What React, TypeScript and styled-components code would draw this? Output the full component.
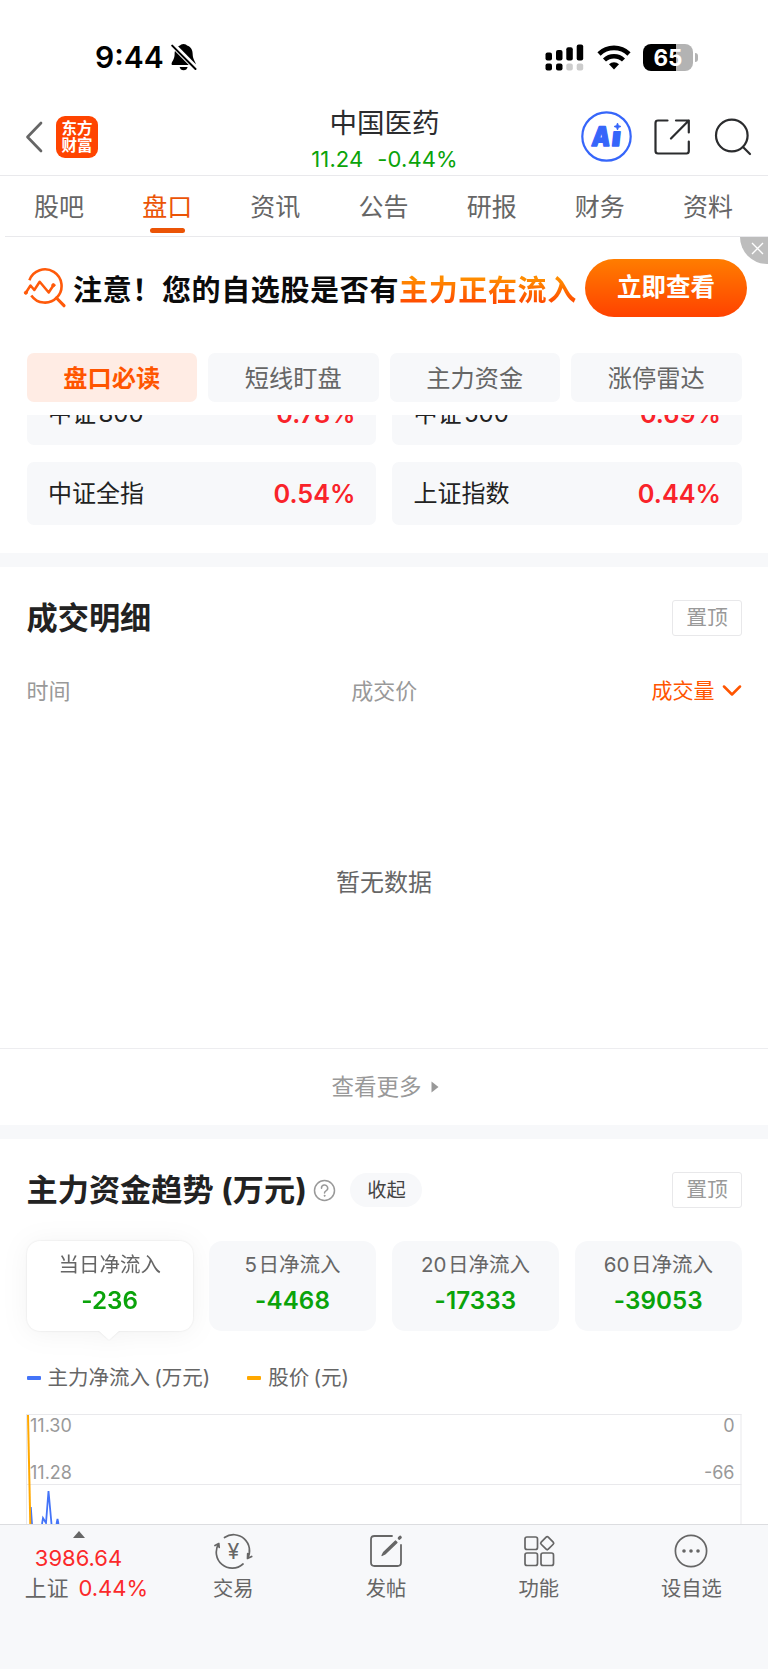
import React from 'react';
import styled, { createGlobalStyle, css } from 'styled-components';

const GlobalStyle = createGlobalStyle`
  * { box-sizing: border-box; }
  html, body { margin: 0; padding: 0; background: #fff; }
  body {
    font-family: Inter, "Noto Sans CJK SC", sans-serif;
    color: #222;
    -webkit-font-smoothing: antialiased;
  }
`;

const Screen = styled.div`
  width: 768px;
  height: 1669px;
  overflow: hidden;
  background: #fff;
  display: flex;
  flex-direction: column;
  white-space: nowrap;
`;

/* ---------- status bar ---------- */
const StatusBar = styled.div`
  height: 100px;
  padding: 14px 70px 0 95px;
  display: flex;
  align-items: center;
  justify-content: space-between;
`;
const StatusGroup = styled.div<{ $gap: number }>`
  display: flex;
  align-items: center;
  gap: ${(p) => p.$gap}px;
`;
const Clock = styled.span`
  font-size: 30px;
  font-weight: 600;
  line-height: 36px;
  color: #000;
`;
const BatteryWrap = styled.div`
  display: flex;
  align-items: center;
  gap: 2px;
`;
const Battery = styled.div`
  width: 50px;
  height: 27px;
  border-radius: 8px;
  background: linear-gradient(90deg, #000 0 65%, #b3b3b3 65%);
  color: #fff;
  font-size: 22.5px;
  font-weight: 700;
  line-height: 27px;
  text-align: center;
`;
const BatteryNub = styled.div`
  width: 3px;
  height: 9px;
  border-radius: 0 3px 3px 0;
  background: #b3b3b3;
`;

/* ---------- header ---------- */
const Header = styled.header`
  height: 76px;
  padding: 0 16px 0 25px;
  border-bottom: 1px solid #e9e9ec;
  display: grid;
  grid-template-columns: 1fr 200px 1fr;
`;
const HeaderLeft = styled.div`
  display: flex;
  gap: 13px;
  align-items: center;
  height: 73px;
`;
const HeaderRight = styled.div`
  display: flex;
  justify-content: flex-end;
  align-items: center;
  height: 73px;
`;
const AppLogo = styled.div`
  width: 42px;
  height: 42px;
  border-radius: 9px;
  background: #ff4400;
  color: #fff;
  font-size: 15.5px;
  font-weight: 700;
  line-height: 17px;
  text-align: center;
  padding-top: 4px;
`;
const StockTitle = styled.div`
  display: flex;
  flex-direction: column;
  align-items: center;
  margin-left: -8px;
`;
const StockName = styled.div`
  margin-top: 3.5px;
  font-size: 27.5px;
  line-height: 38px;
  color: #2b2c2e;
`;
const StockQuote = styled.div`
  display: flex;
  gap: 14px;
  font-size: 22px;
  line-height: 28px;
  margin-top: 3.5px;
  letter-spacing: 0.1px;
  color: #0aa30a;
`;

/* ---------- tabs ---------- */
const Tabs = styled.nav`
  height: 61px;
  margin-left: 5px;
  padding-right: 6px;
  border-bottom: 1px solid #e9e9ec;
  display: grid;
  grid-template-columns: repeat(7, 1fr);
`;
const Tab = styled.div<{ $active?: boolean }>`
  display: flex;
  flex-direction: column;
  align-items: center;
  font-size: 25px;
  line-height: 36px;
  padding-top: 13px;
  color: ${(p) => (p.$active ? '#eb5406' : '#666')};
  ${(p) =>
    p.$active &&
    css`
      &::after {
        content: '';
        width: 35px;
        height: 5px;
        margin-top: 3px;
        border-radius: 3px;
        background: #eb5406;
      }
    `}
`;

/* ---------- banner ---------- */
const Banner = styled.div`
  position: relative;
  height: 102px;
  padding: 0 21px 0 23px;
  display: flex;
  align-items: center;
`;
const BannerText = styled.div`
  margin: 6px 0 0 6px;
  flex: 1;
  font-size: 29px;
  font-weight: 700;
  letter-spacing: 0.64px;
  line-height: 40px;
  color: #0b0b0b;
  display: flex;
`;
const BannerAccent = styled.span`
  background: linear-gradient(180deg, #ff8c00 20%, #ff4a00 80%);
  -webkit-background-clip: text;
  background-clip: text;
  color: transparent;
`;
const BannerButton = styled.div`
  width: 162px;
  height: 58px;
  margin-top: -1px;
  border-radius: 29px;
  background: linear-gradient(180deg, #ff7d00, #ff4200);
  color: #fff;
  font-size: 24.5px;
  font-weight: 700;
  line-height: 57px;
  text-align: center;
`;
const BannerClose = styled.div`
  position: absolute;
  top: 0;
  right: 0;
  width: 28px;
  height: 27px;
  border-bottom-left-radius: 28px;
  background: #bdbdbd;
  display: flex;
  align-items: center;
  justify-content: center;
  padding: 0 0 5px 6px;
`;

/* ---------- chips ---------- */
const Chips = styled.div`
  margin-top: 14px;
  padding: 0 26.5px;
  display: grid;
  grid-template-columns: repeat(4, 1fr);
  gap: 11px;
`;
const Chip = styled.div<{ $active?: boolean }>`
  height: 49px;
  border-radius: 7px;
  font-size: 24.2px;
  line-height: 51px;
  text-align: center;
  background: ${(p) => (p.$active ? '#ffece4' : '#f7f8fa')};
  color: ${(p) => (p.$active ? '#ff5500' : '#666')};
  font-weight: ${(p) => (p.$active ? 700 : 400)};
`;

/* ---------- index grid ---------- */
const IndexViewport = styled.div`
  margin-top: 13px;
  height: 138px;
  padding: 0 26.5px;
  overflow: hidden;
`;
const IndexGrid = styled.div`
  margin-top: -33px;
  display: grid;
  grid-template-columns: 1fr 1fr;
  gap: 17px 16px;
`;
const IndexCard = styled.div`
  height: 63px;
  padding: 1px 20.5px 0 21.5px;
  border-radius: 7px;
  background: #f7f8fa;
  display: flex;
  align-items: center;
  justify-content: space-between;
`;
const IndexName = styled.span`
  display: flex;
  gap: 2.5px;
  font-size: 24px;
  line-height: 34px;
  color: #222;
`;
const IndexChange = styled.span`
  font-size: 25.3px;
  font-weight: 600;
  line-height: 34px;
  color: #f9232a;
`;

const Divider = styled.div`
  height: 14px;
  background: #f7f8fa;
`;

/* ---------- sections ---------- */
const SectionHead = styled.div<{ $height: number }>`
  height: ${(p) => p.$height}px;
  padding: 0 26px 0 26.5px;
  display: flex;
  align-items: center;
`;
const SectionTitle = styled.h2`
  margin: 0;
  font-size: 31.2px;
  font-weight: 700;
  line-height: 44px;
  color: #222;
`;
const PinButton = styled.div`
  margin-left: auto;
  width: 70px;
  height: 36px;
  border: 1px solid #e8e8ea;
  border-radius: 3px;
  font-size: 20.8px;
  line-height: 34px;
  text-align: center;
  color: #999;
`;
const CollapsePill = styled.div`
  margin-left: 14px;
  width: 72px;
  height: 34px;
  border-radius: 17px;
  background: #f7f8fa;
  font-size: 19.3px;
  line-height: 34px;
  text-align: center;
  color: #444;
`;
const HelpIcon = styled.svg`
  margin-left: 6.5px;
`;
const TableHead = styled.div`
  height: 44px;
  padding: 2px 26px 0 26.5px;
  display: grid;
  grid-template-columns: 1fr 1fr 1fr;
  align-items: center;
  font-size: 22px;
  line-height: 32px;
  color: #999;
`;
const TableCell = styled.div<{ $align: string; $sorted?: boolean }>`
  display: flex;
  align-items: center;
  justify-content: ${(p) => p.$align};
  gap: 7.5px;
  ${(p) =>
    p.$sorted &&
    css`
      font-size: 21px;
      color: #ff5500;
    `}
`;
const Empty = styled.div`
  height: 337px;
  border-bottom: 1px solid #ededf0;
  font-size: 24px;
  line-height: 36px;
  padding-top: 152.5px;
  text-align: center;
  color: #666;
`;
const More = styled.div`
  height: 76px;
  padding-left: 2px;
  display: flex;
  align-items: center;
  justify-content: center;
  gap: 9px;
  font-size: 22.5px;
  line-height: 32px;
  color: #999;
`;

/* ---------- capital flow ---------- */
const FlowCards = styled.div`
  padding: 0 26.5px;
  display: grid;
  grid-template-columns: repeat(4, 1fr);
  gap: 16.5px;
`;
const FlowCard = styled.div<{ $active?: boolean }>`
  position: relative;
  height: 90px;
  border-radius: 13px;
  padding-top: 9px;
  text-align: center;
  background: ${(p) => (p.$active ? '#fff' : '#f7f8fa')};
  ${(p) =>
    p.$active &&
    css`
      filter: drop-shadow(0 0 1px rgba(0, 0, 0, 0.1)) drop-shadow(0 2px 13px rgba(0, 0, 0, 0.05));
      &::after {
        content: '';
        position: absolute;
        top: 89.5px;
        left: 50%;
        margin-left: -10.5px;
        border: 10.5px solid transparent;
        border-top: 9px solid #fff;
        border-bottom: 0;
      }
    `}
`;
const FlowLabel = styled.div`
  display: flex;
  justify-content: center;
  gap: 1.5px;
  font-size: 20.5px;
  line-height: 30px;
  color: #666;
`;
const FlowValue = styled.div`
  margin-top: 6px;
  font-size: 24.2px;
  font-weight: 600;
  line-height: 30px;
  letter-spacing: 0.1px;
  color: #0aa30a;
`;
const Legend = styled.div`
  margin-top: 31px;
  height: 31px;
  padding: 1px 0 0 26.5px;
  display: flex;
  align-items: center;
  gap: 37px;
`;
const LegendItem = styled.div<{ $color: string }>`
  display: flex;
  align-items: center;
  gap: 7px;
  font-size: 20.5px;
  line-height: 30px;
  word-spacing: -1.5px;
  color: #666;
  &::before {
    content: '';
    width: 14px;
    height: 4px;
    border-radius: 1px;
    background: ${(p) => p.$color};
  }
`;
const Chart = styled.svg`
  display: block;
  flex: none;
  margin-top: 21px;
`;

/* ---------- bottom nav ---------- */
const BottomNav = styled.footer`
  flex: 1;
  border-top: 1px solid #dcdde0;
  background: #f7f8fa;
  display: grid;
  grid-template-columns: 157px repeat(4, 152.7px);
`;
const NavItem = styled.div`
  display: flex;
  flex-direction: column;
  align-items: center;
  padding-top: 8px;
  font-size: 20.3px;
  line-height: 30px;
  color: #666;
  gap: 5px;
`;
const IndexTicker = styled.div`
  display: flex;
  flex-direction: column;
  align-items: center;
  padding-top: 6px;
  font-size: 22px;
  color: #fb2a2a;
`;
const TickerValue = styled.div`
  margin-top: 5px;
  line-height: 30px;
`;
const TickerRow = styled.div`
  display: flex;
  align-items: center;
  gap: 10px;
  line-height: 31px;
  margin-left: 16px;
`;
const TickerName = styled.span`
  font-size: 21.8px;
  color: #666;
`;

const BellOff = () => (
  <svg width="26" height="28" viewBox="0 0 26 28">
    <path d="M12.5 1C14.500 1 15.500 2 16 2.600C20 3.800 21.700 7 21.700 11.500C21.700 16 24.300 18.500 24.600 20.500C24.800 21.600 24 22 23.300 22H2C1 22 .4 21.400.6 20.400C1 18.500 3.600 16 3.600 11.500C3.600 7 5.500 3.700 9 2.600C9.600 2 10.600 1 12.500 1Z" fill="#000" />
    <path d="M8.600 24H16.600C16.200 26 14.700 27.300 12.600 27.300S9 26 8.600 24Z" fill="#000" />
    <path d="M0 0L26 26.500" stroke="#fff" strokeWidth="5.500" />
    <path d="M1.200 2.600L24.500 26" stroke="#000" strokeWidth="2" strokeLinecap="round" />
  </svg>
);

const Signal = () => (
  <svg width="39" height="27" viewBox="0 0 39 27">
    <rect x="0.500" y="8.500" width="6.500" height="8" rx="2" />
    <rect x="11" y="6" width="6.500" height="10.500" rx="2" />
    <rect x="21.300" y="3.200" width="6.500" height="13.300" rx="2" />
    <rect x="31.700" y="0.500" width="6.500" height="16" rx="2" />
    <rect x="0.500" y="19.500" width="6.500" height="7" rx="2" />
    <rect x="11" y="19.500" width="6.500" height="7" rx="2" />
    <rect x="21.300" y="19.500" width="6.500" height="7" rx="2" fill="#ccc" />
    <rect x="31.700" y="19.500" width="6.500" height="7" rx="2" fill="#ccc" />
  </svg>
);

const Wifi = () => (
  <svg width="34" height="25" viewBox="0 0 34 25">
    <path d="M2 9A21.500 21.500 0 0 1 32 9" fill="none" stroke="#000" strokeWidth="4.600" />
    <path d="M7.500 15A13.800 13.800 0 0 1 26.500 15" fill="none" stroke="#000" strokeWidth="4.400" />
    <path d="M17 24.500L12 19.300A7.200 7.200 0 0 1 22 19.300Z" />
  </svg>
);

const BackIcon = () => (
  <svg width="18" height="32" viewBox="0 0 18 32">
    <path d="M16 2L2.500 16L16 30" fill="none" stroke="#666" strokeWidth="2.700" strokeLinecap="round" strokeLinejoin="round" />
  </svg>
);

const AiIcon = () => (
  <svg width="51" height="51" viewBox="0 0 51 51">
    <circle cx="25.500" cy="25.500" r="24.200" fill="none" stroke="#3666fa" strokeWidth="2.200" />
    <g transform="translate(0 35) skewX(-6)" fill="#3666fa" stroke="#3666fa" strokeWidth="1.400" strokeLinejoin="round" fontFamily="Inter" fontWeight="900" fontSize="27">
      <text x="10" y="-0.500" textLength="18.500" lengthAdjust="spacingAndGlyphs">A</text>
      <text x="30" y="0" fontSize="26" textLength="9" lengthAdjust="spacingAndGlyphs">ı</text>
    </g>
    <path d="M36.500 12L37.500 14.500L40 15.500L37.500 16.500L36.500 19L35.500 16.500L33 15.500L35.500 14.500Z" fill="#3666fa" stroke="#3666fa" strokeWidth="0.800" />
  </svg>
);

const ShareSvg = styled.svg`
  margin-left: 22px;
`;
const ShareIcon = () => (
  <ShareSvg width="36" height="36" viewBox="0 0 36 36" fill="none" stroke="#2b2c2e" strokeWidth="2.200" strokeLinecap="round" strokeLinejoin="round">
    <path d="M13.500 1.500H4Q1.500 1.500 1.500 4V32Q1.500 34.500 4 34.500H32.500Q34.800 34.500 34.800 32V22.500" />
    <path d="M22 1.500H34.800V13.500M34.800 1.500L17 19.500" />
  </ShareSvg>
);

const SearchSvg = styled.svg`
  margin-left: 24px;
`;
const SearchIcon = () => (
  <SearchSvg width="38" height="38" viewBox="0 0 38 38" fill="none" stroke="#2b2c2e" strokeWidth="2.200" strokeLinecap="round">
    <circle cx="17.800" cy="17.500" r="15.800" />
    <path d="M29 29L36 36" />
  </SearchSvg>
);

const BannerIcon = () => (
  <svg width="44" height="42" viewBox="0 0 44 42" fill="none" stroke="#ff5a0a" strokeLinecap="round" strokeLinejoin="round">
    <path d="M6.400 13.200A16.600 16.600 0 1 1 8.300 28.400" strokeWidth="2.600" strokeLinecap="butt" />
    <path d="M33.500 31L41 38.700" strokeWidth="3.200" />
    <path d="M3 25.500L7.500 18.500L11.300 23L16.700 14.700L25.700 25.500L30.300 18.500" strokeWidth="2.500" />
    <circle cx="2.800" cy="25.800" r="1.500" fill="#ff5a0a" strokeWidth="1" />
    <circle cx="30.400" cy="18.200" r="1.600" fill="#ff5a0a" strokeWidth="1" />
  </svg>
);

const TradeIcon = () => (
  <svg width="40" height="36" viewBox="0 0 40 36" fill="none" stroke="#666" strokeWidth="1.700" strokeLinecap="round" strokeLinejoin="round">
    <path d="M11.500 4.500A16 16 0 0 1 34.500 25.500L38.700 23.500M34.500 25.500L34.700 20.500" />
    <path d="M30 31A16 16 0 0 1 5.800 10.500L2 12.500M5.800 10.500L6.200 14.500" />
    <text x="20.300" y="26" textAnchor="middle" fontFamily="Inter" fontSize="21.500" fill="#666" stroke="none">¥</text>
  </svg>
);

const PostIcon = () => (
  <svg width="36" height="36" viewBox="0 0 36 36" fill="none" stroke="#666" strokeWidth="1.800" strokeLinecap="round" strokeLinejoin="round">
    <path d="M24 3H6.500Q3 3 3 6.500V29.500Q3 33 6.500 33H29.500Q33 33 33 29.500V12" />
    <path d="M14 22.500L15.500 19.500L27.500 8L29 9.500L17 21Z" fill="#666" strokeWidth="1.200" />
    <path d="M31.300 5.200L32.200 4.300" strokeWidth="3.200" />
  </svg>
);

const FeaturesIcon = () => (
  <svg width="36" height="36" viewBox="0 0 36 36" fill="none" stroke="#666" strokeWidth="1.700" strokeLinejoin="round">
    <rect x="4" y="4" width="12.500" height="12.500" rx="2" />
    <rect x="4" y="20" width="12.500" height="12.500" rx="2" />
    <rect x="20" y="20" width="12.500" height="12.500" rx="2" />
    <rect x="21.200" y="5.200" width="10" height="10" rx="1.500" transform="rotate(45 26.200 10.200)" />
  </svg>
);

const MoreIcon = () => (
  <svg width="36" height="36" viewBox="0 0 36 36" fill="#666">
    <circle cx="18" cy="18" r="15.600" fill="none" stroke="#666" strokeWidth="1.700" />
    <circle cx="11" cy="18" r="1.800" />
    <circle cx="18" cy="18" r="1.800" />
    <circle cx="25" cy="18" r="1.800" />
  </svg>
);

const tabs = ['股吧', '盘口', '资讯', '公告', '研报', '财务', '资料'];
const chips = ['盘口必读', '短线盯盘', '主力资金', '涨停雷达'];
const indices = [
  { name: '中证', code: '800', change: '0.78%' },
  { name: '中证', code: '500', change: '0.69%' },
  { name: '中证全指', code: '', change: '0.54%' },
  { name: '上证指数', code: '', change: '0.44%' },
];
const flows = [
  { days: '', label: '当日净流入', value: '-236' },
  { days: '5', label: '日净流入', value: '-4468' },
  { days: '20', label: '日净流入', value: '-17333' },
  { days: '60', label: '日净流入', value: '-39053' },
];
const navItems = [
  { label: '交易', Icon: TradeIcon },
  { label: '发帖', Icon: PostIcon },
  { label: '功能', Icon: FeaturesIcon },
  { label: '设自选', Icon: MoreIcon },
];

export default function App() {
  return (
    <Screen>
      <GlobalStyle />
      <StatusBar>
        <StatusGroup $gap={7}>
          <Clock>9:44</Clock>
          <BellOff />
        </StatusGroup>
        <StatusGroup $gap={12.4}>
          <Signal />
          <Wifi />
          <BatteryWrap>
            <Battery>65</Battery>
            <BatteryNub />
          </BatteryWrap>
        </StatusGroup>
      </StatusBar>

      <Header>
        <HeaderLeft>
          <BackIcon />
          <AppLogo>
            东方
            <br />
            财富
          </AppLogo>
        </HeaderLeft>
        <StockTitle>
          <StockName>中国医药</StockName>
          <StockQuote>
            <span>11.24</span>
            <span>-0.44%</span>
          </StockQuote>
        </StockTitle>
        <HeaderRight>
          <AiIcon />
          <ShareIcon />
          <SearchIcon />
        </HeaderRight>
      </Header>

      <Tabs>
        {tabs.map((t, i) => (
          <Tab key={t} $active={i === 1}>
            {t}
          </Tab>
        ))}
      </Tabs>

      <Banner>
        <BannerIcon />
        <BannerText>
          注意！您的自选股是否有<BannerAccent>主力正在流入</BannerAccent>
        </BannerText>
        <BannerButton>立即查看</BannerButton>
        <BannerClose>
          <svg width="13" height="13" viewBox="0 0 13 13" stroke="#fff" strokeWidth="1.400">
            <path d="M1 1L12 12M12 1L1 12" />
          </svg>
        </BannerClose>
      </Banner>

      <Chips>
        {chips.map((c, i) => (
          <Chip key={c} $active={i === 0}>
            {c}
          </Chip>
        ))}
      </Chips>

      <IndexViewport>
        <IndexGrid>
          {indices.map(({ name, code, change }) => (
            <IndexCard key={name + code}>
              <IndexName>
                {name}
                {code && <span>{code}</span>}
              </IndexName>
              <IndexChange>{change}</IndexChange>
            </IndexCard>
          ))}
        </IndexGrid>
      </IndexViewport>

      <Divider />

      <SectionHead $height={101}>
        <SectionTitle>成交明细</SectionTitle>
        <PinButton>置顶</PinButton>
      </SectionHead>
      <TableHead>
        <TableCell $align="flex-start">时间</TableCell>
        <TableCell $align="center">成交价</TableCell>
        <TableCell $align="flex-end" $sorted>
          成交量
          <svg width="20" height="12" viewBox="0 0 20 12" fill="none" stroke="#ff5500" strokeWidth="2.500" strokeLinecap="round" strokeLinejoin="round">
            <path d="M2 1.500L10 9.500L18 1.500" />
          </svg>
        </TableCell>
      </TableHead>
      <Empty>暂无数据</Empty>
      <More>
        查看更多
        <svg width="8" height="12" viewBox="0 0 8 12" fill="#999">
          <path d="M0.500 0.500L7.500 6L0.500 11.500Z" />
        </svg>
      </More>

      <Divider />

      <SectionHead $height={102}>
        <SectionTitle>主力资金趋势 (万元)</SectionTitle>
        <HelpIcon width="23" height="23" viewBox="0 0 23 23" fill="none" stroke="#999" strokeWidth="1.500" strokeLinecap="round">
          <circle cx="11.500" cy="11.500" r="10" />
          <path d="M8.500 9.300A3.100 3.100 0 1 1 13 11.800Q11.500 12.600 11.500 14" />
          <circle cx="11.500" cy="16.800" r="0.500" fill="#999" strokeWidth="1" />
        </HelpIcon>
        <CollapsePill>收起</CollapsePill>
        <PinButton>置顶</PinButton>
      </SectionHead>
      <FlowCards>
        {flows.map(({ days, label, value }, i) => (
          <FlowCard key={value} $active={i === 0}>
            <FlowLabel>
              {days && <span>{days}</span>}
              {label}
            </FlowLabel>
            <FlowValue>{value}</FlowValue>
          </FlowCard>
        ))}
      </FlowCards>
      <Legend>
        <LegendItem $color="#4474f8">主力净流入 (万元)</LegendItem>
        <LegendItem $color="#ffa800">股价 (元)</LegendItem>
      </Legend>
      <Chart width="768" height="110" viewBox="0 0 768 110" fontFamily="Inter" fontSize="18">
        <path d="M27 0.500H741.500M27 70.500H741.500M26.500 0V110M741 0V110" stroke="#e9e9ec" fill="none" />
        <g fill="#999">
          <text x="30" y="18.300">11.30</text>
          <text x="30" y="65.300">11.28</text>
          <text x="734.500" y="18.300" textAnchor="end">0</text>
          <text x="734.500" y="65.300" textAnchor="end">-66</text>
        </g>
        <path d="M30.800 93L32 110M42 110L43 104L46 109L48.500 77L51.500 110M56.500 110L57.500 105L58.500 110" fill="none" stroke="#4474f8" strokeWidth="1.800" />
        <path d="M28 1L30.300 110" stroke="#ffa800" strokeWidth="2" />
      </Chart>

      <BottomNav>
        <IndexTicker>
          <svg width="12" height="7" viewBox="0 0 12 7" fill="#666">
            <path d="M0 7L6 0L12 7Z" />
          </svg>
          <TickerValue>3986.64</TickerValue>
          <TickerRow>
            <TickerName>上证</TickerName>
            <span>0.44%</span>
          </TickerRow>
        </IndexTicker>
        {navItems.map(({ label, Icon }) => (
          <NavItem key={label}>
            <Icon />
            {label}
          </NavItem>
        ))}
      </BottomNav>
    </Screen>
  );
}
